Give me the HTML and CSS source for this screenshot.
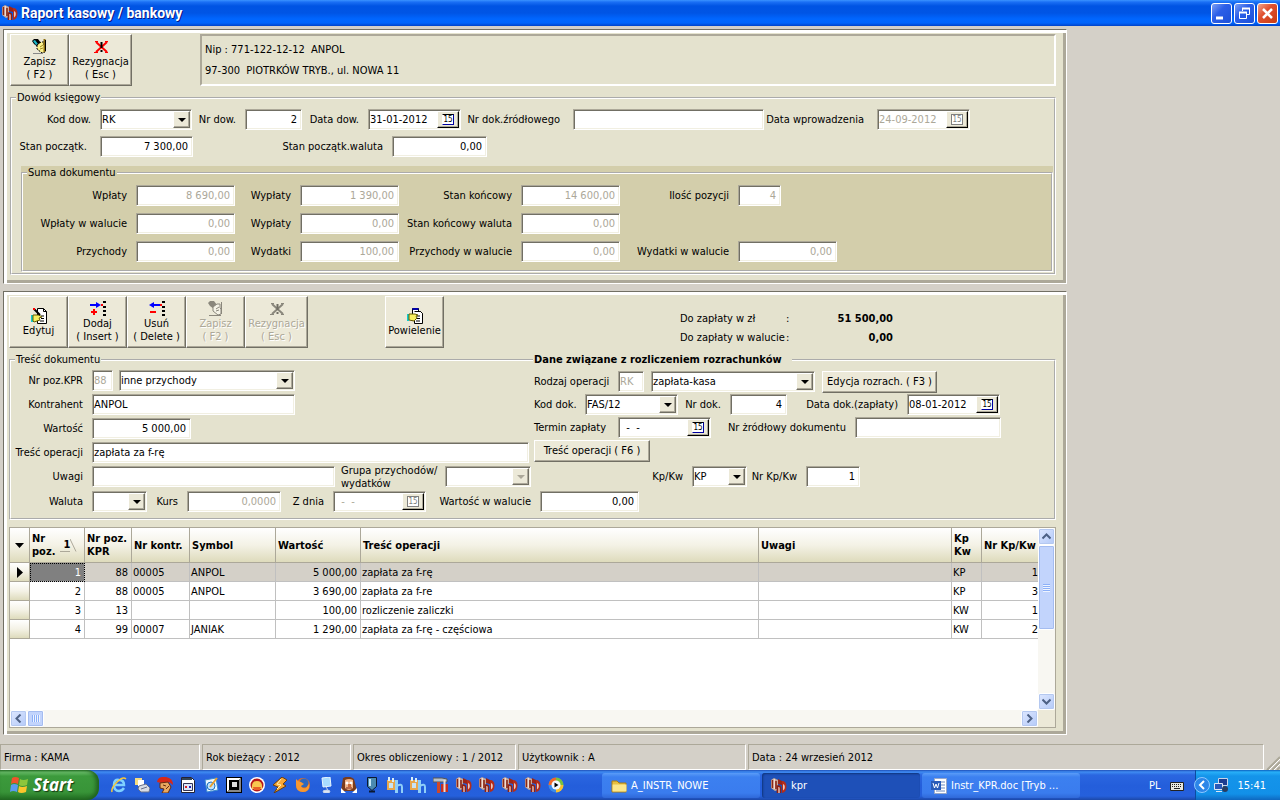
FILE: index.html
```html
<!DOCTYPE html>
<html lang="pl">
<head>
  <meta charset="UTF-8">
  <title>Raport kasowy / bankowy</title>
  <link rel="stylesheet" href="styles.css">
</head>
<body>

<!-- Shared icons -->
<svg class="sprite" aria-hidden="true">
  <symbol id="i-kpr" viewBox="0 0 16 16">
    <path d="M0 2l3-2 4 2v10l-3 1-4-3z" fill="#c8a898"/>
    <path d="M1.500 2v8M5 3v8" stroke="#8c2818" stroke-width="1.600"/>
    <path d="M3.300 1v10" stroke="#f4e4dc" stroke-width="1.200"/>
    <path d="M7 1l4 2v4L7 6z" fill="#9c2416"/>
    <path d="M6 15V8l4 1v6z" fill="#e8c8bc"/>
    <path d="M6.500 15V8q3 0 3 2v5" fill="none" stroke="#8c2014" stroke-width="1.600"/>
    <path d="M11 3q4.500 0 4.500 5.500T11 15z" fill="#b42c1a"/>
    <path d="M12.200 6q1.500.500 1.500 3t-1.500 3.500z" fill="#f8ece6"/>
  </symbol>
  <symbol id="i-save" viewBox="0 0 16 16">
    <path d="M2 0h4l3 4-3 4-4-3-2-3z" fill="#000"/>
    <path d="M1 2l2-1 3 4-2 1z" fill="#1ab8c8"/>
    <path d="M5 6l4-3h3v4l1 1v5l-3 1-5-4z" fill="#fbf08a" stroke="#000" stroke-dasharray="2 1"/>
    <path d="M8 8l3-2M8 10l3-1" stroke="#a08a20"/>
    <path d="M12.500 0v13" stroke="#8a6a10" stroke-width="2"/>
    <path d="M13.500 1v11" stroke="#000"/>
    <path d="M1 14.500h10" stroke="#888"/>
  </symbol>
  <symbol id="i-save-off" viewBox="0 0 16 16">
    <path d="M2 0h4l3 4-3 4-4-3-2-3z" fill="#8a877c"/>
    <path d="M5 6l4-3h3v4l1 1v5l-3 1-5-4z" fill="#f4f2e6" stroke="#8a877c"/>
    <path d="M8 8l3-2M8 10l3-1M13.500 1v12M1 14.500h12" stroke="#8a877c"/>
  </symbol>
  <symbol id="i-cancel" viewBox="0 0 16 16">
    <path d="M3 3l11 10M14 3L3 13" stroke="#f00" stroke-width="2"/>
    <path d="M2 2.500h3M12 2.500h3M1 13.500h4M12 13.500h3" stroke="#f00"/>
    <path d="M8.500 3v6M8.500 11v2" stroke="#000" stroke-width="2"/>
  </symbol>
  <symbol id="i-cancel-off" viewBox="0 0 16 16">
    <path d="M3 3l11 10M14 3L3 13" stroke="#8a877c" stroke-width="2"/>
    <path d="M2 2.500h3M12 2.500h3M1 13.500h4M12 13.500h3" stroke="#8a877c"/>
    <path d="M8.500 3v6M8.500 11v2" stroke="#716f64" stroke-width="2"/>
  </symbol>
  <symbol id="i-edit" viewBox="0 0 16 16">
    <path d="M6.500.500h6l3 3v12h-9z" fill="#fff" stroke="#000"/>
    <path d="M12.500.500v3h3M10 8h3M10 10.500h3M9 13h4" fill="none" stroke="#000"/>
    <path d="M1 7v7" stroke="#1cc" stroke-width="2"/>
    <path d="M2 7h6l3 2-3 1 1 2-6 2-1-1z" fill="#f8f060" stroke="#665c00"/>
    <path d="M3 1l6 6" stroke="#000" stroke-width="2"/>
    <path d="M2 1h2" stroke="#f00" stroke-width="2"/>
  </symbol>
  <symbol id="i-copy" viewBox="0 0 16 16">
    <path d="M5.500.500h6v3h2l2 2v10h-8v-3h-2z" fill="#fff" stroke="#000"/>
    <path d="M5.500 1h6" stroke="#00a" stroke-width="2"/>
    <path d="M7.500 3.500h6l2 2M10 8h3M10 10.500h3M9 13h4" fill="none" stroke="#000"/>
    <path d="M1 6v7" stroke="#1cc" stroke-width="2"/>
    <path d="M2 6h6l3 1-2 1 1 2-3 3-5-1z" fill="#f8f060" stroke="#665c00"/>
  </symbol>
  <symbol id="i-add" viewBox="0 0 16 16">
    <path d="M0 4h7" stroke="#00f" stroke-width="2"/><path d="M6 1l5 3-5 3z" fill="#00f"/>
    <path d="M1 11h6M4 8v6" stroke="#f00" stroke-width="2"/>
    <path d="M13 1h3M13 6h3M13 10h3M13 14h3" stroke="#000" stroke-width="2"/><path d="M11 3h2v2h-2z" fill="#f00"/>
  </symbol>
  <symbol id="i-del" viewBox="0 0 16 16">
    <path d="M4 4h7" stroke="#00f" stroke-width="2"/><path d="M5 1L0 4l5 3z" fill="#00f"/>
    <path d="M1 11h6" stroke="#f00" stroke-width="2"/>
    <path d="M13 1h3M13 6h3M13 10h3M13 14h3" stroke="#000" stroke-width="2"/><path d="M11 3h2v2h-2z" fill="#f00"/>
  </symbol>
  <symbol id="i-hosts" viewBox="0 0 16 16">
    <path d="M0 3h8v10H0z" fill="#e8a84c"/>
    <path d="M2 0v4M6 1v4" stroke="#d8eef8" stroke-width="2"/>
    <path d="M2 6h4v5H2z" fill="#c8e4f4"/>
    <path d="M8 3h3v13H8z" fill="#8fcff8"/>
    <path d="M10 9q5-3 5 1v6" fill="none" stroke="#8fcff8" stroke-width="2"/>
  </symbol>
  <symbol id="i-left" viewBox="0 0 9 9"><path d="M6.500.500l-4 4 4 4" fill="none" stroke="#4d6185" stroke-width="2"/></symbol>
  <symbol id="i-right" viewBox="0 0 9 9"><path d="M2.500.500l4 4-4 4" fill="none" stroke="#4d6185" stroke-width="2"/></symbol>
  <symbol id="i-up" viewBox="0 0 9 9"><path d="M.500 6.500l4-4 4 4" fill="none" stroke="#4d6185" stroke-width="2"/></symbol>
  <symbol id="i-down" viewBox="0 0 9 9"><path d="M.500 2.500l4 4 4-4" fill="none" stroke="#4d6185" stroke-width="2"/></symbol>
</svg>

<header class="titlebar">
  <svg class="icon"><use href="#i-kpr"/></svg>
  <h1>Raport kasowy / bankowy</h1>
  <button class="win-btn" aria-label="Minimalizuj"><svg viewBox="0 0 19 19"><path d="M4 14h7" stroke="#fff" stroke-width="3"/></svg></button>
  <button class="win-btn" aria-label="Przywróć"><svg viewBox="0 0 19 19"><path d="M7.500 7V4.500h7v6H12" fill="none" stroke="#fff"/><path d="M7 4.500h8" stroke="#fff" stroke-width="2"/><path d="M4.500 8.500h7v6h-7z" fill="none" stroke="#fff"/><path d="M4 8.500h8" stroke="#fff" stroke-width="2"/></svg></button>
  <button class="win-btn close" aria-label="Zamknij"><svg viewBox="0 0 19 19"><path d="M5 5l9 9M14 5l-9 9" stroke="#fff" stroke-width="2.500"/></svg></button>
</header>

<main class="work">

  <!-- Document header -->
  <section class="panel panel-doc">
    <div class="doc-top">
      <div class="toolbar">
        <button class="tool"><svg class="icon"><use href="#i-save"/></svg>Zapisz<br>( F2 )</button>
        <button class="tool wide"><svg class="icon"><use href="#i-cancel"/></svg>Rezygnacja<br>( Esc )</button>
      </div>
      <div class="company">
        <p>Nip : 771-122-12-12 &nbsp;ANPOL</p>
        <p>97-300 &nbsp;PIOTRKÓW TRYB., ul. NOWA 11</p>
      </div>
    </div>

    <fieldset class="box">
      <legend>Dowód księgowy</legend>
      <div class="row row-doc">
        <label for="kodDow">Kod dow.</label>
        <span class="combo"><select id="kodDow"><option>RK</option></select><i class="arrow"></i></span>
        <label for="nrDow">Nr dow.</label>
        <input class="field num" id="nrDow" type="text" value="2">
        <label for="dataDow">Data dow.</label>
        <span class="date"><input id="dataDow" type="text" value="31-01-2012"><button><b>15</b></button></span>
        <label class="far" for="nrZrod">Nr dok.źródłowego</label>
        <input class="field" id="nrZrod" type="text">
        <label class="far" for="dataWpr">Data wprowadzenia</label>
        <span class="date"><input id="dataWpr" type="text" value="24-09-2012" disabled><button disabled><b>15</b></button></span>
      </div>
      <div class="row row-start">
        <label class="far" for="stanPocz">Stan początk.</label>
        <input class="field num" id="stanPocz" type="text" value="7 300,00">
        <label for="stanWal">Stan początk.waluta</label>
        <input class="field num" id="stanWal" type="text" value="0,00">
      </div>

      <div class="sum-wrap">
        <fieldset class="box">
          <legend>Suma dokumentu</legend>
          <div class="sum-grid">
            <label for="s1">Wpłaty</label><input class="field num" id="s1" value="8 690,00" disabled>
            <label for="s2">Wypłaty</label><input class="field num" id="s2" value="1 390,00" disabled>
            <label for="s3">Stan końcowy</label><input class="field num" id="s3" value="14 600,00" disabled>
            <label for="s4">Ilość pozycji</label><input class="field num short" id="s4" value="4" disabled>

            <label for="s5">Wpłaty w walucie</label><input class="field num" id="s5" value="0,00" disabled>
            <label for="s6">Wypłaty</label><input class="field num" id="s6" value="0,00" disabled>
            <label for="s7">Stan końcowy waluta</label><input class="field num" id="s7" value="0,00" disabled>
            <span></span><span></span>

            <label for="s8">Przychody</label><input class="field num" id="s8" value="0,00" disabled>
            <label for="s9">Wydatki</label><input class="field num" id="s9" value="100,00" disabled>
            <label for="s10">Przychody w walucie</label><input class="field num" id="s10" value="0,00" disabled>
            <label for="s11">Wydatki w walucie</label><input class="field num" id="s11" value="0,00" disabled>
          </div>
        </fieldset>
      </div>
    </fieldset>
  </section>

  <!-- Items -->
  <section class="panel panel-items">
    <div class="items-top">
      <div class="toolbar">
        <button class="tool"><svg class="icon"><use href="#i-edit"/></svg>Edytuj</button>
        <button class="tool"><svg class="icon"><use href="#i-add"/></svg>Dodaj<br>( Insert )</button>
        <button class="tool"><svg class="icon"><use href="#i-del"/></svg>Usuń<br>( Delete )</button>
        <button class="tool" disabled><svg class="icon"><use href="#i-save-off"/></svg>Zapisz<br>( F2 )</button>
        <button class="tool wide" disabled><svg class="icon"><use href="#i-cancel-off"/></svg>Rezygnacja<br>( Esc )</button>
      </div>
      <button class="tool"><svg class="icon"><use href="#i-copy"/></svg>Powielenie</button>
      <div class="totals">
        <span>Do zapłaty w zł</span><span>:</span><strong>51 500,00</strong>
        <span>Do zapłaty w walucie</span><span>:</span><strong>0,00</strong>
      </div>
    </div>

    <fieldset class="box box-items">
      <legend>Treść dokumentu</legend>
      <h2 class="settle-title">Dane związane z rozliczeniem rozrachunków</h2>
      <div class="columns">
        <div class="col-left">
          <div class="row row-kpr">
            <label for="nrKpr">Nr poz.KPR</label>
            <input class="field" id="nrKpr" value="88" disabled>
            <span class="combo"><select aria-label="Rodzaj pozycji"><option>inne przychody</option></select><i class="arrow"></i></span>
          </div>
          <div class="row row-kontr">
            <label for="kontr">Kontrahent</label>
            <input class="field" id="kontr" value="ANPOL">
          </div>
          <div class="row row-wart">
            <label for="wart">Wartość</label>
            <input class="field num" id="wart" value="5 000,00">
          </div>
          <div class="row row-tresc">
            <label for="tresc">Treść operacji</label>
            <input class="field" id="tresc" value="zapłata za f-rę">
          </div>
        </div>
        <div class="col-right">
          <div class="row row-rodzaj">
            <label for="rodzaj">Rodzaj operacji</label>
            <input class="field" id="rodzaj" value="RK" disabled>
            <span class="combo"><select aria-label="Operacja"><option>zapłata-kasa</option></select><i class="arrow"></i></span>
            <button class="btn">Edycja rozrach. ( F3 )</button>
          </div>
          <div class="row row-kod">
            <label for="kodDok">Kod dok.</label>
            <span class="combo"><select id="kodDok"><option>FAS/12</option></select><i class="arrow"></i></span>
            <label for="nrDok">Nr dok.</label>
            <input class="field num" id="nrDok" value="4">
            <label for="dataDok">Data dok.(zapłaty)</label>
            <span class="date"><input id="dataDok" value="08-01-2012"><button><b>15</b></button></span>
          </div>
          <div class="row row-termin">
            <label for="termin">Termin zapłaty</label>
            <span class="date"><input id="termin" value="  -  -"><button><b>15</b></button></span>
            <label for="nrZd">Nr żródłowy dokumentu</label>
            <input class="field" id="nrZd">
          </div>
          <div class="row row-f6">
            <button class="btn">Treść operacji ( F6 )</button>
          </div>
        </div>
      </div>
      <div class="row row-uwagi">
        <label for="uwagi">Uwagi</label>
        <input class="field" id="uwagi">
        <label class="two-line" for="grupa">Grupa przychodów/ wydatków</label>
        <span class="combo off"><select id="grupa" disabled><option></option></select><i class="arrow"></i></span>
        <label for="kpkw">Kp/Kw</label>
        <span class="combo"><select id="kpkw"><option>KP</option></select><i class="arrow"></i></span>
        <label for="nrKpkw">Nr Kp/Kw</label>
        <input class="field num" id="nrKpkw" value="1">
      </div>
      <div class="row row-waluta">
        <label for="waluta">Waluta</label>
        <span class="combo"><select id="waluta"><option></option></select><i class="arrow"></i></span>
        <label for="kurs">Kurs</label>
        <input class="field num" id="kurs" value="0,0000" disabled>
        <label for="zdnia">Z dnia</label>
        <span class="date"><input id="zdnia" value="  -  -" disabled><button disabled><b>15</b></button></span>
        <label for="wartWal">Wartość w walucie</label>
        <input class="field num" id="wartWal" value="0,00">
      </div>
    </fieldset>

    <div class="grid-view">
      <div class="grid-body">
        <table>
          <colgroup>
            <col class="c-mark"><col class="c-poz"><col class="c-kpr"><col class="c-kontr"><col class="c-symbol"><col class="c-wart"><col class="c-tresc"><col><col class="c-kp"><col class="c-nrkp">
          </colgroup>
          <thead>
            <tr>
              <th><svg class="mark" viewBox="0 0 9 9"><path d="M0 2h9L4.500 7z"/></svg></th>
              <th><div class="sorted"><span>Nr<br>poz.</span><span class="sort">1</span><svg viewBox="0 0 7 14"><path d="M0 1l6 12.500" fill="none" stroke="#aca899"/></svg></div></th>
              <th>Nr poz.<br>KPR</th><th>Nr kontr.</th><th>Symbol</th><th>Wartość</th><th>Treść operacji</th><th>Uwagi</th><th>Kp<br>Kw</th><th>Nr Kp/Kw</th>
            </tr>
          </thead>
          <tbody>
            <tr class="current"><td><svg class="mark" viewBox="0 0 9 11"><path d="M2 0v11l6-5.500z"/></svg></td><td class="n focus">1</td><td class="n">88</td><td>00005</td><td>ANPOL</td><td class="n">5 000,00</td><td>zapłata za f-rę</td><td></td><td>KP</td><td class="n edge">1</td></tr>
            <tr><td></td><td class="n">2</td><td class="n">88</td><td>00005</td><td>ANPOL</td><td class="n">3 690,00</td><td>zapłata za f-re</td><td></td><td>KP</td><td class="n edge">3</td></tr>
            <tr><td></td><td class="n">3</td><td class="n">13</td><td></td><td></td><td class="n">100,00</td><td>rozliczenie zaliczki</td><td></td><td>KW</td><td class="n edge">1</td></tr>
            <tr><td></td><td class="n">4</td><td class="n">99</td><td>00007</td><td>JANIAK</td><td class="n">1 290,00</td><td>zapłata za f-rę - częściowa</td><td></td><td>KW</td><td class="n edge">2</td></tr>
          </tbody>
        </table>
      </div>
      <div class="scroll-v">
        <button class="sb" aria-label="W górę"><svg><use href="#i-up"/></svg></button>
        <div class="thumb"><i></i></div>
        <button class="sb last" aria-label="W dół"><svg><use href="#i-down"/></svg></button>
      </div>
      <div class="scroll-h">
        <button class="sb" aria-label="W lewo"><svg><use href="#i-left"/></svg></button>
        <div class="thumb"><i></i></div>
        <button class="sb last" aria-label="W prawo"><svg><use href="#i-right"/></svg></button>
      </div>
      <div class="corner"></div>
    </div>
  </section>
</main>

<footer class="status">
  <span class="st-firma">Firma : KAMA</span>
  <span class="st-rok">Rok bieżący : 2012</span>
  <span class="st-okres">Okres obliczeniowy : 1 / 2012</span>
  <span class="st-user">Użytkownik : A</span>
  <span class="st-data">Data : 24 wrzesień 2012</span>
  <svg class="grip" viewBox="0 0 14 14"><path d="M14 1L1 14M14 6l-8 8M14 11l-3 3" stroke="#aca899" stroke-width="2"/><path d="M14 3L3 14M14 8l-6 6" stroke="#fff"/></svg>
</footer>

<nav class="taskbar">
  <button class="start">
    <svg viewBox="0 0 20 20">
      <path d="M3 3q3-2 7 0l-1 6q-4-2-7 0z" fill="#f0532c"/><path d="M11 4q3 2 8 0l-1 6q-5 2-8 0z" fill="#8cc63c"/>
      <path d="M2 10q3-2 7 0l-1 7q-4-2-7 0z" fill="#5b9bf0"/><path d="M10 11q3 2 8 0l-1 6q-5 2-8 0z" fill="#fbc52c"/>
    </svg>
    Start
  </button>
  <div class="quick">
    <svg viewBox="0 0 16 16"><path d="M13 11q-2 3-5 3-5 0-5-6t5-5q5 0 5 5H4" fill="none" stroke="#7fd0ff" stroke-width="2.500"/><path d="M1 15Q0 11 6 5t9-3" fill="none" stroke="#f8c838" stroke-width="1.500"/></svg>
    <svg viewBox="0 0 16 16"><path d="M1 1h7v7H1z" fill="#f6dc80"/><path d="M4 3h6v6H4z" fill="#fff"/><path d="M5 9l7-2 4 4-1 4H7l-3-3z" fill="#d8dce4" stroke="#68708a"/><path d="M7 12l6-2" stroke="#68708a"/></svg>
    <svg viewBox="0 0 16 16"><path d="M0 5q1-6 9-5 7 1 7 8l-4-3-8 1z" fill="#d82818"/><path d="M3 6l8-1 3 5-3 6H5l2-4-4-1z" fill="#e8a860" stroke="#6a2c0c"/><path d="M6 8l3 1M9 12l3-3" stroke="#6a2c0c"/></svg>
    <svg viewBox="0 0 16 16"><path d="M1.500.500h10l3 3v12h-13z" fill="#fff" stroke="#223"/><path d="M2 2h10" stroke="#345" stroke-width="2"/><path d="M3.500 6.500h9v7h-9z" fill="#dde6f8" stroke="#335"/><path d="M5 9h2v2H5z" fill="#d22"/><path d="M9 9h2v2H9z" fill="#22b"/></svg>
    <svg viewBox="0 0 16 16"><path d="M2 3l11-2 2 12-11 2z" fill="#eef8ff" stroke="#3a8ad0"/><circle cx="8" cy="9" r="4" fill="#bfe4ff" stroke="#1d70c0"/><path d="M7 10l7-9" stroke="#e8a030" stroke-width="2"/></svg>
    <svg viewBox="0 0 16 16"><path d="M0 0h16v16H0z"/><path d="M1 1h14L1 15z" fill="#fff"/><path d="M15 1v14H1z" fill="#888"/><path d="M3 3h10v10H3z"/><path d="M6 5h5v5H6z" fill="#ddd"/></svg>
    <svg viewBox="0 0 16 16"><circle cx="8" cy="8" r="8" fill="#fff"/><circle cx="8" cy="8" r="6.500" fill="#b81818"/><path d="M3 12q-1-8 5-8t5 8z" fill="#f8c850"/><path d="M4 10h8l-1 3H5z" fill="#e86028"/></svg>
    <svg viewBox="0 0 16 16"><path d="M10 0l5 3-4 4 3 2L2 16l4-6-5-2z" fill="#f8a838" stroke="#6a3c0c"/><path d="M9 2L5 7l4 1-4 4" fill="none" stroke="#fff2b0"/></svg>
    <svg viewBox="0 0 16 16"><circle cx="8" cy="8" r="7" fill="#e8701c"/><circle cx="9" cy="6" r="4.500" fill="#2c68c0"/><path d="M1 2q2 3 5 3l3 2-3 2q1 3 5 2l3-4q1 8-6 8T1 8z" fill="#f89830"/></svg>
    <svg viewBox="0 0 16 16"><path d="M4 1l8-1 1 9-8 1z" fill="#a8dcff" stroke="#e8f6ff"/><path d="M8 10l2 3M5 14q4-2 7 0l-1 2H6z" stroke="#c8d4e8" fill="#dde6f4"/></svg>
    <svg viewBox="0 0 16 16"><path d="M2 1q6-3 11 1l3 12H0z" fill="#7a3c1c"/><path d="M4 3q4-2 8 0v8q-4 4-8 0z" fill="#f0b488"/><circle cx="6" cy="6" r="1.500" fill="#fff"/><circle cx="10" cy="6" r="1.500" fill="#fff"/><path d="M7 7h3v3H7z" fill="#c86838"/><path d="M5 11h6" stroke="#802010"/><path d="M0 11l5 5H0zM16 11l-5 5h5z" fill="#fff"/></svg>
    <svg viewBox="0 0 16 16"><path d="M3.500.500h9v9l-4.500 4-4.500-4z" fill="#4a8ab0" stroke="#0a1830"/><path d="M6 2v7" stroke="#c8e8f8" stroke-width="2"/><path d="M5 14.500h6" stroke="#0a1830" stroke-width="2"/></svg>
    <svg><use href="#i-hosts"/></svg>
    <svg><use href="#i-hosts"/></svg>
    <svg viewBox="0 0 16 16"><path d="M0 1h9l5 1v3H0z" fill="#b8c0c8" stroke="#555"/><path d="M4 5h3v11H4z" fill="#d04828"/><path d="M8 7h7v8H8z" fill="#c83020"/><path d="M11.500 3v12" stroke="#e8e0d8" stroke-width="2"/></svg>
    <svg><use href="#i-kpr"/></svg>
    <svg><use href="#i-kpr"/></svg>
    <svg><use href="#i-kpr"/></svg>
    <svg><use href="#i-kpr"/></svg>
    <svg viewBox="0 0 16 16"><circle cx="8" cy="8" r="7.500" fill="#3c8ae8"/><path d="M8 .500A7.500 7.500 0 0 0 .500 8H8z" fill="#f06828"/><path d="M8 .500A7.500 7.500 0 0 1 15.500 8H8z" fill="#78c040"/><path d="M8 15.500A7.500 7.500 0 0 0 15.500 8H8z" fill="#f8c030"/><circle cx="8" cy="8" r="4.500" fill="#f4f8ff"/><path d="M6.500 5.500v5l4-2.500z"/></svg>
  </div>
  <div class="tasks">
    <button class="task"><svg viewBox="0 0 16 16"><path d="M1 3h5l2 2h7v9H1z" fill="#e8c040" stroke="#a87c14"/><path d="M1.500 6.500h14v7h-14z" fill="#fbe78c"/></svg>A_INSTR_NOWE</button>
    <button class="task active"><svg><use href="#i-kpr"/></svg>kpr</button>
    <button class="task"><svg viewBox="0 0 16 16"><path d="M3.500.500h12v15h-12z" fill="#fff" stroke="#98a8c8"/><path d="M10 4h4M10 7h4M10 10h4M5 13h9" stroke="#6888c0"/><path d="M0 3h10v9H0z" fill="#2a5cb8"/><path d="M2 5l1.500 5L5 6l1.500 4L8 5" fill="none" stroke="#fff"/></svg>Instr_KPR.doc [Tryb ...</button>
  </div>
  <div class="lang">
    <span>PL</span>
    <svg viewBox="0 0 16 16"><path d="M1.500 5.500h13v8h-13z" fill="#e8e8e0" stroke="#222"/><path d="M3 7.500h10M3 9.500h10" stroke="#222" stroke-dasharray="1 1"/><path d="M5 11.500h6" stroke="#222"/></svg>
  </div>
  <div class="tray">
    <svg class="expand" viewBox="0 0 16 16"><circle cx="8" cy="8" r="7.500" fill="#2c86e8" stroke="#8cc8ff"/><path d="M10 4L6 8l4 4" fill="none" stroke="#fff" stroke-width="2"/></svg>
    <svg viewBox="0 0 16 16"><path d="M5.500 1.500h9v7h-9z" fill="#1c3c90" stroke="#c8d4e8"/><path d="M1.500 6.500h8v6h-8z" fill="#2858b8" stroke="#dde6f4"/><path d="M3 14.500h6" stroke="#dde6f4"/><circle cx="12" cy="12" r="3" fill="#283c60"/></svg>
    <time>15:41</time>
  </div>
</nav>

</body>
</html>
```

FILE: styles.css
```css
* {
  box-sizing: border-box;
}
body {
  margin: 0;
  min-height: 100vh;
  display: flex;
  flex-direction: column;
  background: #d4d0c8;
  color: #000;
  font: 11px/13px "DejaVu Sans Condensed", Tahoma, sans-serif;
}
input, select, button {
  font: inherit;
  color: inherit;
  margin: 0;
  border-radius: 0;
}
h1, h2, p {
  margin: 0;
}
.sprite {
  display: none;
}
.icon {
  width: 16px;
  height: 16px;
  flex: none;
}

/* title bar */
.titlebar {
  display: flex;
  align-items: center;
  gap: 2px;
  height: 26px;
  padding: 0 2px;
  background: linear-gradient(#3a93ff 0, #1b70f5 2px, #0054e3 6px, #0055e5 13px, #0066ff 19px, #0064fb 23px, #0042c8 26px);
}
.titlebar h1 {
  flex: 1;
  padding-left: 1px;
  color: #fff;
  font: bold 14px/16px Roboto, sans-serif;
  text-shadow: 1px 1px #0a1883;
}
.win-btn {
  width: 21px;
  height: 21px;
  padding: 0;
  border: 1px solid #fff;
  border-radius: 3px;
  background: linear-gradient(135deg, #7da0f4, #2c5fe8 40%, #1c50d8);
}
.win-btn.close {
  background: linear-gradient(135deg, #f0a48c, #e05030 40%, #c83c10);
}
.win-btn svg {
  display: block;
  width: 19px;
  height: 19px;
}

/* panels */
.work {
  flex: 1;
  display: flex;
  flex-direction: column;
  gap: 7px;
  padding: 3px 3px 9px;
}
.panel {
  max-width: 1064px;
  border: 1px solid;
  border-color: #716f64 #fff #fff #716f64;
  background: #e4e2ce;
  box-shadow: inset 3px 3px #fff, inset -3px -3px #aca899;
}
.panel-doc {
  padding: 4px 10px 8px 6px;
}
.panel-items {
  flex: 1;
  display: flex;
  flex-direction: column;
  padding: 4px 10px 6px 5px;
}
.doc-top {
  display: flex;
  gap: 68px;
  margin-bottom: 5px;
}
.toolbar {
  display: flex;
}
.tool {
  display: flex;
  flex-direction: column;
  align-items: center;
  justify-content: center;
  width: 59px;
  height: 52px;
  padding: 0;
  border: 1px solid;
  border-color: #fff #716f64 #716f64 #fff;
  background: #ece9d8;
  box-shadow: inset -1px -1px #aca899;
  white-space: nowrap;
}
.tool.wide {
  width: 63px;
}
.tool:disabled {
  color: #aca899;
  text-shadow: 1px 1px #fff;
}
.company {
  flex: 1;
  display: flex;
  flex-direction: column;
  gap: 8px;
  padding: 7px 3px;
  border: 2px solid;
  border-color: #aca899 #fff #fff #aca899;
}

/* group boxes */
.box {
  position: relative;
  min-width: 0;
  margin: 0;
  padding: 0;
  border: 2px groove #fff;
}
.box legend {
  margin-left: 4px;
  padding: 0 1px;
}
.sum-wrap {
  margin: 9px 1px 1px 9px;
  background: #d3ceab;
}
.row {
  display: grid;
  grid-template-rows: 21px;
  align-items: center;
}
.row label, .sum-grid label {
  padding-right: 9px;
  text-align: right;
  white-space: nowrap;
}
.row label.far {
  padding-right: 13px;
}
.row-doc {
  grid-template-columns: 88px 92px 53px 57px 66px 93px 112px 191px 113px 93px;
  margin-top: 5px;
}
.row-start {
  grid-template-columns: 88px 93px 199px 95px;
  margin-top: 6px;
}
.sum-grid {
  display: grid;
  grid-template-columns: 113px 99px 65px 99px 122px 99px 118px 99px;
  align-items: center;
  row-gap: 7px;
  padding: 6px 0 8px;
}

/* fields */
.field, .combo, .date {
  width: 100%;
  height: 21px;
  border: 1px solid;
  border-color: #aca899 #fff #fff #aca899;
  background: #fff;
  box-shadow: inset 1px 1px #716f64, inset -1px -1px #f1efe2;
}
.field {
  padding: 0 3px 0 1px;
}
.field.num {
  padding-right: 4px;
  text-align: right;
}
.field.short {
  width: 43px;
}
.field:disabled, .date input:disabled {
  color: #aca899;
}
.combo, .date {
  display: flex;
  padding: 1px;
}
.combo select, .date input {
  flex: 1;
  min-width: 0;
  padding: 0;
  border: 0;
  background: none;
  appearance: none;
}
.date input {
  white-space: pre;
}
.arrow, .date button {
  display: flex;
  align-items: center;
  justify-content: center;
  width: 17px;
  flex: none;
  border: 1px solid;
  border-color: #fff #716f64 #716f64 #fff;
  background: #ece9d8;
  box-shadow: inset -1px -1px #aca899;
}
.arrow::before {
  content: "";
  border: 4px solid transparent;
  border-top-color: #000;
  border-bottom: 0;
}
.off .arrow::before {
  border-top-color: #aca899;
}
.date button {
  width: 22px;
  padding: 0;
  border-color: #fff #000 #000 #fff;
}
.date b {
  width: 12px;
  border: 1px solid;
  border-color: #000 #0000a0 #0000a0 #fff;
  background: #fff;
  font: 8px/9px "DejaVu Sans Condensed", sans-serif;
  text-align: center;
}
.date button:disabled b {
  border-color: #808080;
  color: #808080;
}
.btn {
  height: 22px;
  padding: 0;
  border: 1px solid;
  border-color: #fff #716f64 #716f64 #fff;
  background: #ece9d8;
  box-shadow: inset -1px -1px #aca899;
  white-space: nowrap;
}

/* items panel */
.items-top {
  display: flex;
  margin-bottom: 5px;
}
.items-top > .tool {
  margin-left: 77px;
}
.totals {
  display: grid;
  grid-template-columns: 106px 16px 91px;
  gap: 6px 0;
  align-content: start;
  margin-left: 236px;
  padding-top: 16px;
  white-space: nowrap;
}
.totals strong {
  text-align: right;
}
.box-items {
  padding: 4px 0 6px;
}
.settle-title {
  position: absolute;
  top: -13px;
  left: 522px;
  padding: 0 10px 0 1px;
  background: #e4e2ce;
  font: bold 11px/13px "DejaVu Sans Condensed", Tahoma, sans-serif;
  white-space: nowrap;
}
.columns {
  display: grid;
  grid-template-columns: 518px 1fr;
  gap: 5px;
}
.col-left {
  display: grid;
  gap: 3px;
}
.col-right {
  display: grid;
  align-content: start;
  gap: 2px;
  padding-top: 1px;
}
.row-kpr {
  grid-template-columns: 81px 21px 182px;
}
.row-kpr .combo {
  width: auto;
  margin-left: 6px;
}
.row-kontr {
  grid-template-columns: 81px 203px;
}
.row-wart {
  grid-template-columns: 81px 99px;
}
.row-tresc {
  grid-template-columns: 81px 1fr;
}
.row-rodzaj {
  grid-template-columns: 84px 26px 171px 122px;
}
.row-rodzaj .combo {
  width: auto;
  margin-left: 7px;
}
.row-rodzaj .btn {
  margin-left: 7px;
}
.row-kod {
  grid-template-columns: 51px 93px 52px 57px 120px 93px;
}
.row-termin {
  grid-template-columns: 84px 93px 144px 146px;
}
.col-right label:first-child {
  text-align: left;
}
.row-f6 {
  grid-template-columns: 116px;
}
.row-uwagi {
  grid-template-columns: 81px 243px 110px 86px 161px 55px 59px 54px;
  margin-top: 3px;
}
.row .two-line {
  padding: 0 0 0 6px;
  text-align: left;
  white-space: normal;
}
.row-waluta {
  grid-template-columns: 81px 55px 40px 94px 52px 93px 114px 99px;
  margin-top: 4px;
}

/* table */
.grid-view {
  flex: 1;
  display: grid;
  grid-template-columns: 1fr 17px;
  grid-template-rows: 1fr 17px;
  margin-top: 7px;
  border: 1px solid #aca899;
  background: #fff;
}
.grid-body {
  overflow: hidden;
}
table {
  width: 100%;
  table-layout: fixed;
  border-collapse: separate;
  border-spacing: 0;
}
.c-mark { width: 20px; }
.c-poz { width: 55px; }
.c-kpr { width: 47px; }
.c-kontr { width: 58px; }
.c-symbol { width: 86px; }
.c-wart { width: 85px; }
.c-tresc { width: 398px; }
.c-kp { width: 30px; }
.c-nrkp { width: 56px; }
th {
  height: 35px;
  padding: 0 2px;
  border-right: 1px solid #aca899;
  border-bottom: 1px solid #aca899;
  background: linear-gradient(#fff, #f4f2e6 50%, #dedbbc);
  text-align: left;
  white-space: nowrap;
}
td {
  height: 19px;
  padding: 0 2px 0 1px;
  border-right: 1px solid #c0c0c0;
  border-bottom: 1px solid #c0c0c0;
  white-space: nowrap;
}
td:first-child {
  border-color: #aca899;
  background: linear-gradient(#fff, #f4f2e6 50%, #dedbbc);
}
th:first-child, td:first-child {
  padding: 0;
  text-align: center;
}
th:last-child, td:last-child {
  border-right: 0;
}
td.n {
  padding-right: 3px;
  text-align: right;
}
td.edge {
  padding-right: 0;
}
.current td:not(:first-child) {
  background: #d4d0c8;
}
.current td.focus {
  background: #808080;
  color: #fff;
  outline: 1px dotted #000;
  outline-offset: -1px;
}
.mark {
  display: block;
  width: 9px;
  height: 11px;
  margin: 0 auto;
}
.sorted {
  display: flex;
  align-items: center;
}
.sorted svg {
  width: 7px;
  height: 14px;
}
.sort {
  margin-left: 5px;
  width: 10px;
  border-bottom: 1px solid #aca899;
  text-align: right;
}

/* scrollbars */
.scroll-v, .scroll-h {
  display: flex;
  background: #f8f7f2;
}
.scroll-v {
  flex-direction: column;
}
.sb {
  display: flex;
  align-items: center;
  justify-content: center;
  width: 17px;
  height: 17px;
  flex: none;
  padding: 0;
  border: 1px solid #fff;
  border-radius: 2px;
  background: linear-gradient(135deg, #dde7ff, #b4caf8);
  box-shadow: inset 0 0 0 1px #b4c8f0;
}
.sb svg {
  width: 9px;
  height: 9px;
}
.sb.last {
  margin-top: auto;
  margin-left: auto;
}
.thumb {
  display: flex;
  align-items: center;
  justify-content: center;
  border: 1px solid #fff;
  border-radius: 2px;
  background: #c2d4fc;
  box-shadow: inset 0 0 0 1px #a4bcf0;
}
.scroll-v .thumb {
  height: 85px;
}
.scroll-h .thumb {
  width: 17px;
}
.thumb i {
  width: 7px;
  height: 8px;
  background: repeating-linear-gradient(#8cb0f8 0 1px, #eef4ff 1px 2px);
}
.scroll-h .thumb i {
  width: 8px;
  height: 7px;
  background: repeating-linear-gradient(90deg, #8cb0f8 0 1px, #eef4ff 1px 2px);
}
.corner {
  background: #ece9d8;
}

/* status bar */
.status {
  display: flex;
  gap: 2px;
  height: 26px;
}
.status span {
  padding: 6px 3px;
  border: 1px solid;
  border-color: #aca899 #fff #fff #aca899;
  white-space: nowrap;
}
.st-firma { width: 200px; }
.st-rok { width: 149px; }
.st-okres { width: 163px; }
.st-user { width: 228px; }
.st-data { flex: 1; }
.grip {
  width: 14px;
  height: 14px;
  align-self: flex-end;
}

/* taskbar */
.taskbar {
  display: flex;
  align-items: stretch;
  height: 30px;
  background: linear-gradient(#1f4fb8 0, #3f8cf3 2px, #2a66e0 5px, #245edb 16px, #2560dc 26px, #1c48a8 30px);
  color: #fff;
}
.taskbar svg {
  width: 16px;
  height: 16px;
  flex: none;
}
.taskbar .start {
  display: flex;
  align-items: center;
  gap: 4px;
  width: 99px;
  padding: 0 0 0 9px;
  border: 0;
  border-radius: 0 12px 12px 0;
  background: linear-gradient(#2a7a2a 0, #6cc06c 2px, #3c9a3c 6px, #389438 22px, #226c22 30px);
  box-shadow: inset -3px 0 4px #1f5f1f;
  font: italic bold 17px/20px "Open Sans", sans-serif;
  text-shadow: 1px 1px 1px #123a12;
}
.taskbar .start svg {
  width: 20px;
  height: 20px;
}
.quick {
  display: flex;
  align-items: center;
  gap: 7px;
  padding-left: 12px;
}
.tasks {
  flex: 1;
  display: flex;
  gap: 2px;
  padding: 3px 0 2px 38px;
}
.task {
  display: flex;
  align-items: center;
  gap: 4px;
  width: 158px;
  padding: 0 9px;
  border: 0;
  border-radius: 3px;
  background: linear-gradient(#5a9cf8, #3c80f0 4px, #3a7cee 20px, #2f68d8);
  white-space: nowrap;
}
.task.active {
  background: #1e50b8;
  box-shadow: inset 1px 1px 2px #10347c;
}
.lang {
  display: flex;
  align-items: center;
  gap: 9px;
  padding-right: 10px;
}
.tray {
  display: flex;
  align-items: center;
  gap: 3px;
  padding-right: 14px;
  border-left: 1px solid #0c4ca0;
  background: linear-gradient(#0c60c0 0, #28b0f8 2px, #1494ea 6px, #1290e8 24px, #0e68c0 30px);
}
.tray .expand {
  margin-left: -2px;
}
.tray time {
  margin-left: 5px;
}
```
